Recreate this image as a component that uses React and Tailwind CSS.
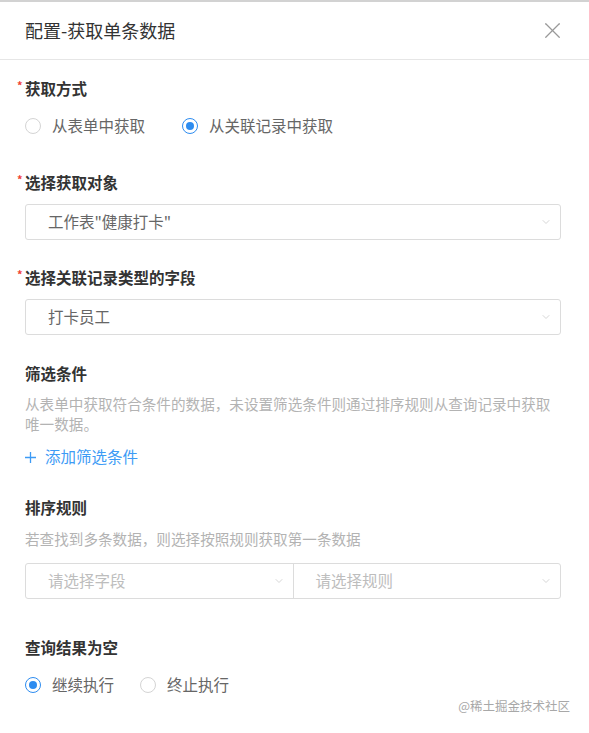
import { X, ChevronDown } from 'lucide-react';

const FONT = { fontFamily: '"Noto Sans CJK SC", "Noto Sans", sans-serif' };

// ── 小组件 ─────────────────────────────────────────────
const Label = ({ required, children, className = '' }) => (
  <div className={`relative h-5 flex items-center text-[15.5px] font-bold text-[#333] ${className}`}>
    {required && (
      <span className="absolute -left-[8px] top-[1px] text-[11px] leading-none text-[#f04134]">*</span>
    )}
    {children}
  </div>
);

const Radio = ({ checked, children }) => (
  <label className="flex items-center gap-[11px] h-5">
    <span
      className={`w-4 h-4 rounded-full border flex items-center justify-center bg-white ${
        checked ? 'border-[#2d8cf0]' : 'border-[#d4d4d4]'
      }`}
    >
      {checked && <span className="w-2 h-2 rounded-full bg-[#2d8cf0]" />}
    </span>
    <span className="text-[15.5px] text-[#666]">{children}</span>
  </label>
);

const Chevron = () => <ChevronDown size={12} strokeWidth={1.5} className="text-[#c8c8c8] flex-shrink-0" />;

const SelectBox = ({ value, placeholder }) => (
  <div className="h-[36px] border border-[#dcdcdc] rounded-[3px] flex items-center pl-[22px] pr-[8px] bg-white">
    <span className={`flex-1 text-[15.5px] ${value ? 'text-[#666]' : 'text-[#bdbdbd]'}`}>
      {value || placeholder}
    </span>
    <Chevron />
  </div>
);

export default function App() {
  return (
    <div style={FONT} className="relative w-[589px] h-[733px] bg-white overflow-hidden">
      {/* 顶部阴影线 */}
      <div className="h-[2px] bg-[#d2d2d2]" />

      {/* Header */}
      <div className="h-[58px] border-b border-[#e6e6e6] flex items-center justify-between pl-[25px] pr-[23px]">
        <h1 className="text-[18px] text-[#333] font-normal">配置-获取单条数据</h1>
        <X size={27} strokeWidth={1.1} className="text-[#999]" />
      </div>

      {/* Body */}
      <div className="pl-[25px] pr-[28px]">
        <Label required className="mt-[19px]">获取方式</Label>
        <div className="flex items-center gap-[37px] mt-[17px]">
          <Radio>从表单中获取</Radio>
          <Radio checked>从关联记录中获取</Radio>
        </div>

        <Label required className="mt-[37px]">选择获取对象</Label>
        <div className="mt-[11px]">
          <SelectBox value={'工作表"健康打卡"'} />
        </div>

        <Label required className="mt-[28px]">选择关联记录类型的字段</Label>
        <div className="mt-[11px]">
          <SelectBox value="打卡员工" />
        </div>

        <Label className="mt-[29px]">筛选条件</Label>
        <p className="mt-[10px] text-[14.6px] leading-[20px] text-[#b3b3b3] whitespace-nowrap">
          从表单中获取符合条件的数据，未设置筛选条件则通过排序规则从查询记录中获取
          <br />
          唯一数据。
        </p>
        <div className="mt-[13px] h-5 flex items-center gap-[9px] text-[15.5px] text-[#3d9bf5]">
          <svg width="11" height="11" viewBox="0 0 11 11" className="flex-shrink-0">
            <path d="M5.5 0v11M0 5.5h11" stroke="currentColor" strokeWidth="1.3" />
          </svg>
          <span>添加筛选条件</span>
        </div>

        <Label className="mt-[31px]">排序规则</Label>
        <p className="mt-[11px] text-[14.6px] leading-[20px] text-[#b3b3b3]">
          若查找到多条数据，则选择按照规则获取第一条数据
        </p>
        <div className="mt-[14px] h-[36px] border border-[#dcdcdc] rounded-[3px] flex bg-white">
          <div className="flex-1 flex items-center pl-[22px] pr-[8px] border-r border-[#dcdcdc]">
            <span className="flex-1 text-[15.5px] text-[#bdbdbd]">请选择字段</span>
            <Chevron />
          </div>
          <div className="flex-1 flex items-center pl-[22px] pr-[8px]">
            <span className="flex-1 text-[15.5px] text-[#bdbdbd]">请选择规则</span>
            <Chevron />
          </div>
        </div>

        <Label className="mt-[39px]">查询结果为空</Label>
        <div className="flex items-center gap-[26px] mt-[17px]">
          <Radio checked>继续执行</Radio>
          <Radio>终止执行</Radio>
        </div>
      </div>

      {/* 水印 */}
      <span className="absolute right-[19px] top-[697px] text-[12.5px] text-[#a8a8a8]">@稀土掘金技术社区</span>
    </div>
  );
}
